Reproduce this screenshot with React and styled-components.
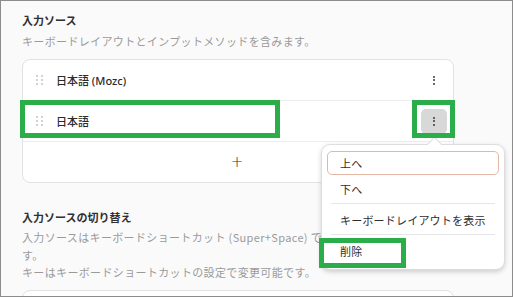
import styled, { createGlobalStyle } from 'styled-components'

const GlobalStyle = createGlobalStyle`
  html, body {
    margin: 0;
    padding: 0;
    background: #fafafa;
  }
  body {
    font-family: "Noto Sans CJK JP", "Noto Sans", sans-serif;
    color: #2e2e2e;
  }
`

const Frame = styled.div`
  position: relative;
  width: 513px;
  height: 297px;
  box-sizing: border-box;
  border: 1px solid #8c8c8c;
  background: #fafafa;
  overflow: hidden;
  padding: 11px 58px 0 21px;
`

const Section = styled.section`
  margin-bottom: ${p => p.gap || 0}px;
`

const Title = styled.h2`
  margin: 0;
  font-size: 11px;
  line-height: 16px;
  font-weight: 700;
  color: #303030;
`

const Desc = styled.p`
  margin: ${p => p.top}px 0 0;
  font-size: 11px;
  line-height: ${p => p.lh || 16}px;
  letter-spacing: 0.35px;
  color: #9a9a9a;
`

const Card = styled.div`
  margin-top: ${p => p.top}px;
  background: #fff;
  border: 1px solid #e2e2e2;
  border-radius: 8px;
`

const Row = styled.div`
  position: relative;
  height: 40px;
  display: flex;
  align-items: center;
  padding: ${p => (p.center ? '0' : '0 6px 0 13px')};
  border-top: ${p => (p.first ? 'none' : '1px solid #ececec')};
  justify-content: ${p => (p.center ? 'center' : 'flex-start')};
`

const Handle = styled.span`
  display: grid;
  grid-template-columns: 2px 2px;
  gap: 2px 3px;
  margin-right: 13px;
  span {
    width: 2px;
    height: 2px;
    border-radius: 1px;
    background: #c2c2c2;
  }
`

const Label = styled.span`
  flex: 1;
  font-size: 11px;
  font-weight: 500;
  color: #2b2b2b;
  font-family: "Noto Sans", "Noto Sans CJK JP", sans-serif;
`

const MenuWrap = styled.div`
  position: relative;
`

const KebabButton = styled.button`
  width: 26px;
  height: 25px;
  border: none;
  border-radius: 5px;
  background: ${p => (p.active ? '#d8d8d8' : 'transparent')};
  display: flex;
  flex-direction: column;
  align-items: center;
  justify-content: center;
  gap: 1.5px;
  padding: 0;
  span {
    width: 2px;
    height: 2px;
    background: #3a3a3a;
    border-radius: 1px;
  }
`

const Plus = styled.span`
  font-size: 15px;
  font-weight: 300;
  color: #333;
  font-family: "DejaVu Sans", sans-serif;
  line-height: 1;
  margin-left: -2px;
`

const Highlight = styled.div`
  position: absolute;
  left: ${p => p.l}px;
  top: ${p => p.t}px;
  width: ${p => p.w}px;
  height: ${p => p.h}px;
  border: 5px solid #2bae4a;
  box-sizing: border-box;
  pointer-events: none;
  z-index: 5;
`

const Popover = styled.div`
  position: absolute;
  left: -100px;
  top: 35px;
  width: 184px;
  box-sizing: border-box;
  padding: 6px 5px;
  background: #fff;
  border: 1px solid #dedede;
  border-radius: 9px;
  box-shadow: 0 2px 5px rgba(0, 0, 0, 0.18);
  z-index: 4;
  &::before {
    content: '';
    position: absolute;
    top: -6px;
    left: 107px;
    width: 10px;
    height: 10px;
    background: #fff;
    border-left: 1px solid #dedede;
    border-top: 1px solid #dedede;
    transform: rotate(45deg);
  }
`

const Item = styled.div`
  position: relative;
  box-sizing: border-box;
  height: 24px;
  display: flex;
  align-items: center;
  padding: 0 12px;
  margin-bottom: 2px;
  font-size: 11px;
  letter-spacing: 0.2px;
  color: #2e2e2e;
  border-radius: 5px;
  border: 1px solid ${p => (p.focus ? '#e3b7a3' : 'transparent')};
  &:last-child {
    margin-bottom: 0;
  }
`

const Separator = styled.div`
  height: 1px;
  background: #e6e6e6;
  margin: 0 4px 4px;
`

const Dots = ({ n }) => (
  <>
    {Array.from({ length: n }).map((_, i) => (
      <span key={i} />
    ))}
  </>
)

export default function App() {
  return (
    <>
      <GlobalStyle />
      <Frame>
        <Section gap={26}>
          <Title>入力ソース</Title>
          <Desc top={5}>キーボードレイアウトとインプットメソッドを含みます。</Desc>
          <Card top={10}>
            <Row first>
              <Handle>
                <Dots n={6} />
              </Handle>
              <Label>日本語 (Mozc)</Label>
              <KebabButton>
                <Dots n={3} />
              </KebabButton>
            </Row>
            <Row>
              <Highlight l={-3} t={-1} w={260} h={38} />
              <Handle>
                <Dots n={6} />
              </Handle>
              <Label>日本語</Label>
              <MenuWrap>
                <Highlight l={-9} t={-9} w={43} h={38} />
                <KebabButton active>
                  <Dots n={3} />
                </KebabButton>
                <Popover>
                  <Item focus>上へ</Item>
                  <Item>下へ</Item>
                  <Separator />
                  <Item>キーボードレイアウトを表示</Item>
                  <Separator />
                  <Item>
                    <Highlight l={-9} t={-2} w={87} h={30} />
                    削除
                  </Item>
                </Popover>
              </MenuWrap>
            </Row>
            <Row center>
              <Plus>+</Plus>
            </Row>
          </Card>
        </Section>
        <Section>
          <Title>入力ソースの切り替え</Title>
          <Desc top={4} lh={17.5}>
            入力ソースはキーボードショートカット (Super+Space) で切り替えることができま
            <br />
            す。
            <br />
            キーはキーボードショートカットの設定で変更可能です。
          </Desc>
          <Card top={8} style={{ height: 40 }} />
        </Section>
      </Frame>
    </>
  )
}
